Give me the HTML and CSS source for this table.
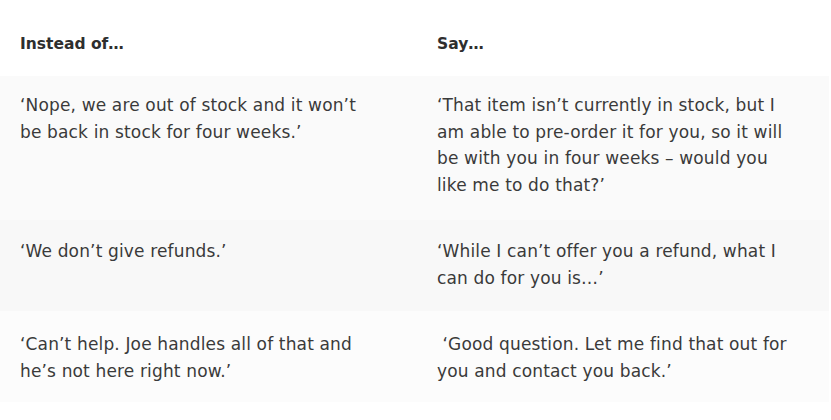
FILE: index.html
```html
<!DOCTYPE html>
<html lang="en">
<head>
<meta charset="utf-8">
<title>Instead of / Say</title>
<link rel="stylesheet" href="styles.css">
</head>
<body>
<div class="table">
  <div class="row head">
    <div class="cell">Instead of…</div>
    <div class="cell">Say…</div>
  </div>
  <div class="row r1">
    <div class="cell">‘Nope, we are out of stock and it won’t<br>be back in stock for four weeks.’</div>
    <div class="cell">‘That item isn’t currently in stock, but I<br>am able to pre-order it for you, so it will<br>be with you in four weeks – would you<br>like me to do that?’</div>
  </div>
  <div class="row r2">
    <div class="cell">‘We don’t give refunds.’</div>
    <div class="cell">‘While I can’t offer you a refund, what I<br>can do for you is…’</div>
  </div>
  <div class="row r3">
    <div class="cell">‘Can’t help. Joe handles all of that and<br>he’s not here right now.’</div>
    <div class="cell">&nbsp;‘Good question. Let me find that out for<br>you and contact you back.’</div>
  </div>
</div>
</body>
</html>
```

FILE: styles.css
```css
html, body {
  margin: 0;
  padding: 0;
  background: #ffffff;
}
body {
  font-family: "DejaVu Sans", "Open Sans", sans-serif;
  font-size: 17px;
  line-height: 26.7px;
  letter-spacing: 0.15px;
  color: #3a3a3a;
}
.table {
  width: 829px;
}
.row {
  display: grid;
  grid-template-columns: 417px 1fr;
}
.cell {
  padding: 18px 10px 18px 20px;
  white-space: nowrap;
}
.head {
  height: 76px;
  box-sizing: border-box;
  font-size: 15.5px;
  font-weight: 700;
  letter-spacing: 0;
  color: #2e2e2e;
}
.head .cell {
  padding-top: 31px;
  padding-bottom: 18px;
}
.r1 { background: #fafafa; height: 144px; box-sizing: border-box; }
.r1 .cell { padding-top: 16px; }
.r2 { background: #f8f8f8; height: 91px; box-sizing: border-box; }
.r3 { background: #fcfcfc; height: 91px; box-sizing: border-box; }
.r3 .cell { padding-top: 20px; }
```
